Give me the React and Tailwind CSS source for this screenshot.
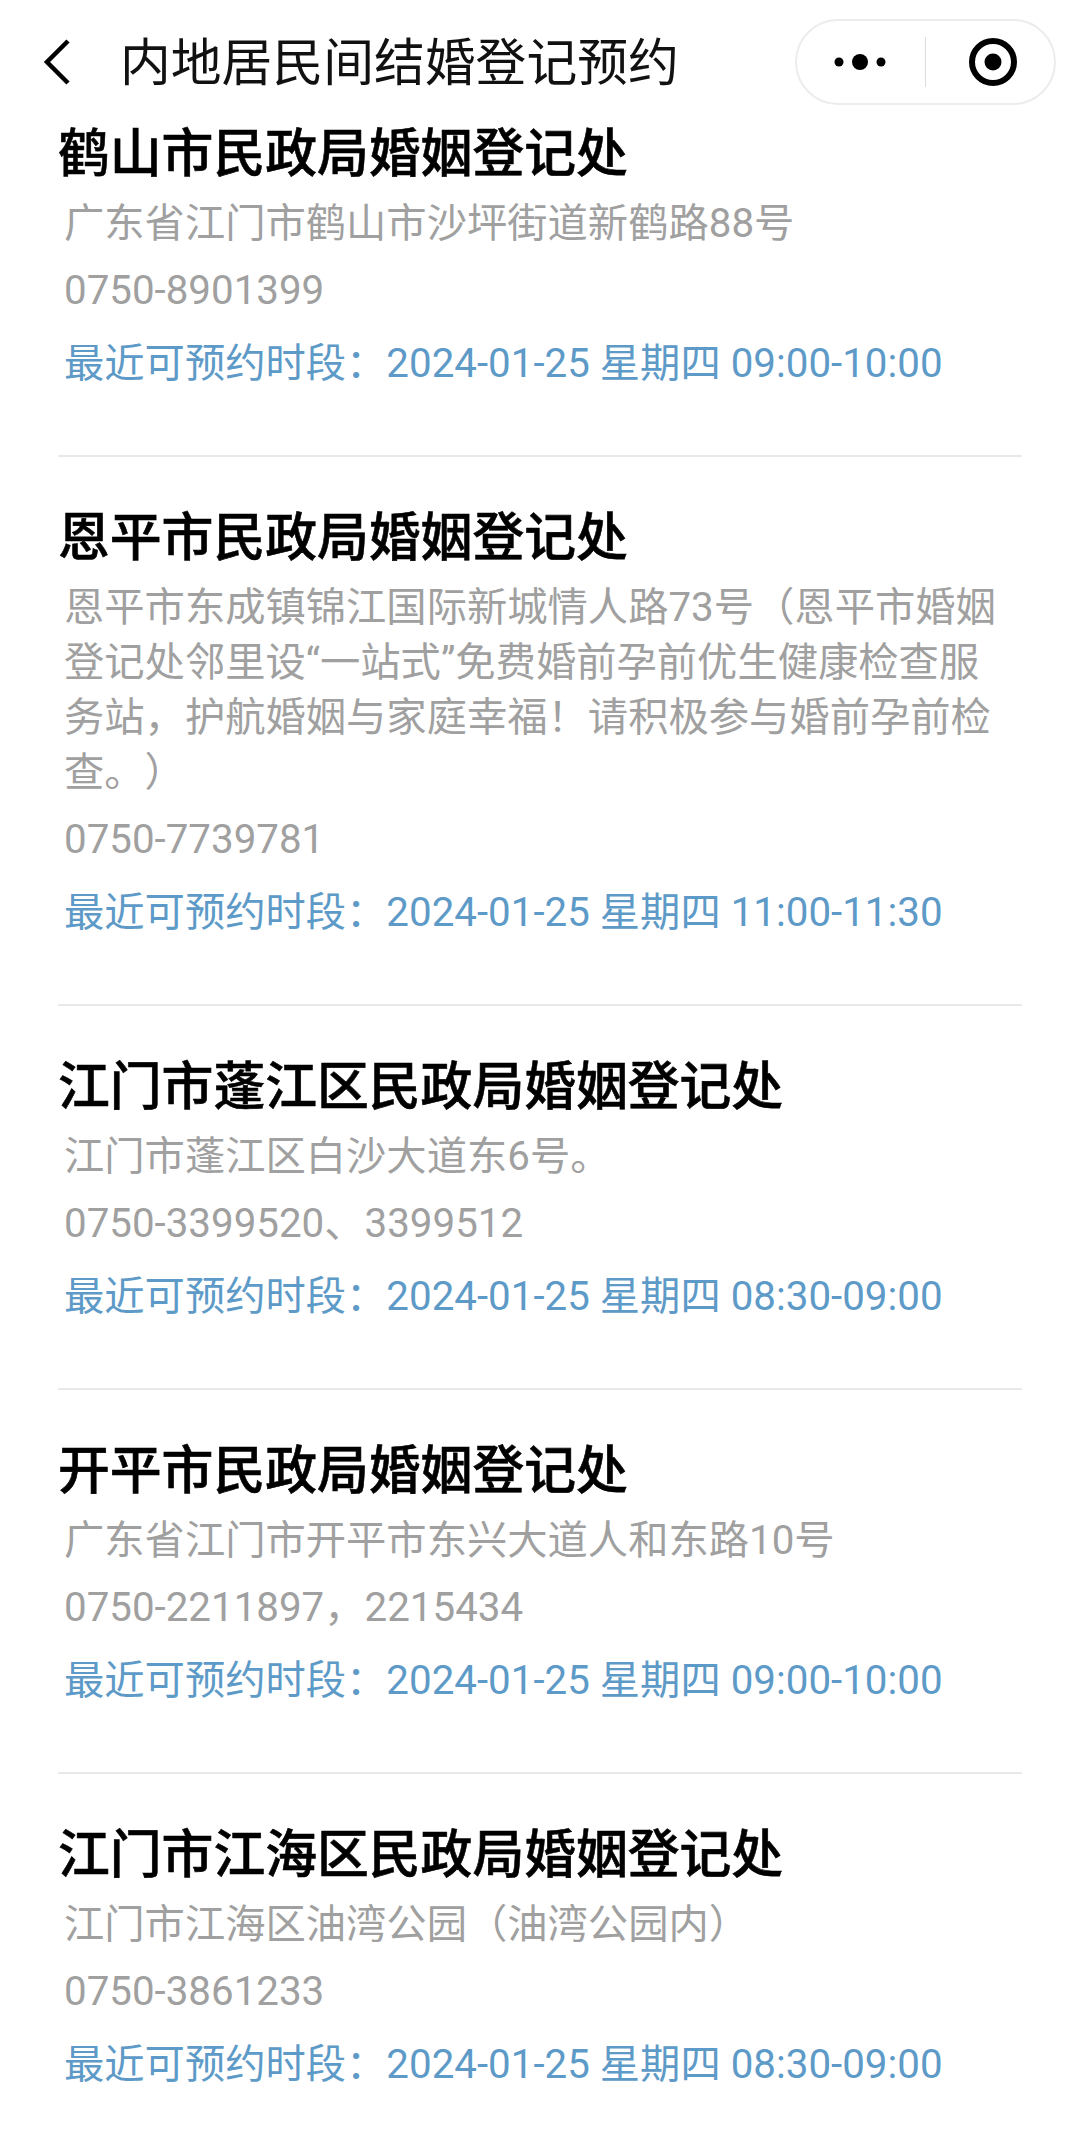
const items = [
  { name: "鹤山市民政局婚姻登记处", addr: "广东省江门市鹤山市沙坪街道新鹤路88号", phone: "0750-8901399", time: "09:00-10:00" },
  { name: "恩平市民政局婚姻登记处", addr: "恩平市东成镇锦江国际新城情人路73号（恩平市婚姻登记处邻里设“一站式”免费婚前孕前优生健康检查服务站，护航婚姻与家庭幸福！请积极参与婚前孕前检查。）", phone: "0750-7739781", time: "11:00-11:30" },
  { name: "江门市蓬江区民政局婚姻登记处", addr: "江门市蓬江区白沙大道东6号。", phone: "0750-3399520、3399512", time: "08:30-09:00" },
  { name: "开平市民政局婚姻登记处", addr: "广东省江门市开平市东兴大道人和东路10号", phone: "0750-2211897，2215434", time: "09:00-10:00" },
  { name: "江门市江海区民政局婚姻登记处", addr: "江门市江海区油湾公园（油湾公园内）", phone: "0750-3861233", time: "08:30-09:00" },
];

function Item({ it, last }) {
  return (
    <div className={last ? "pt-[47px]" : "pt-[47px] pb-[64px] border-b-2 border-[#e9e9e9]"}>
      <h2 className="text-[51.8px] leading-[70px] font-medium text-black [-webkit-text-stroke:0.6px_black]">{it.name}</h2>
      <p className="mt-[6px] ml-[6px] w-[950px] text-[40.3px] leading-[55px] text-[#a0a0a0] [text-spacing-trim:space-all]">{it.addr}</p>
      <p className="mt-[12px] ml-[6px] text-[40.3px] leading-[55px] text-[#a0a0a0]">{it.phone}</p>
      <p className="mt-[18px] ml-[6px] text-[40.3px] leading-[55px] text-[#5d9ac7]">最近可预约时段：2024-01-25 星期四 {it.time}</p>
    </div>
  );
}

export default function App() {
  return (
    <div className="w-[1080px] h-[2135px] overflow-hidden bg-white font-['Roboto','Noto_Sans_CJK_SC',sans-serif]">
      <header className="h-[120px] relative flex items-center pl-[45px]">
        <svg className="absolute left-[42px] top-[38px]" width="32" height="48" viewBox="0 0 32 48" fill="none">
          <path d="M26 3 L5 24 L26 45" stroke="#000" strokeWidth="4.5" />
        </svg>
        <h1 className="ml-[75px] mt-[8px] text-[50.8px] leading-[70px] text-[#111]">内地居民间结婚登记预约</h1>
        <div className="absolute left-[795px] top-[19px] w-[261px] h-[86px] rounded-[43px] border-2 border-[#ececec] flex items-center">
          <svg className="ml-[32px]" width="62" height="20" viewBox="0 0 62 20" fill="#000">
            <circle cx="10" cy="10" r="4.5" />
            <circle cx="31" cy="10" r="8" />
            <circle cx="52" cy="10" r="4.5" />
          </svg>
          <div className="ml-[34px] w-px h-[50px] bg-[#dedede]" />
          <svg className="ml-[42px]" width="50" height="50" viewBox="0 0 50 50" fill="none">
            <circle cx="25" cy="25" r="21" stroke="#000" strokeWidth="6" />
            <circle cx="25" cy="25" r="8.5" fill="#000" />
          </svg>
        </div>
      </header>
      <main className="mx-[58px] w-[964px] -mt-[47px]">
        {items.map((it, i) => (
          <Item key={i} it={it} last={i === items.length - 1} />
        ))}
      </main>
    </div>
  );
}
